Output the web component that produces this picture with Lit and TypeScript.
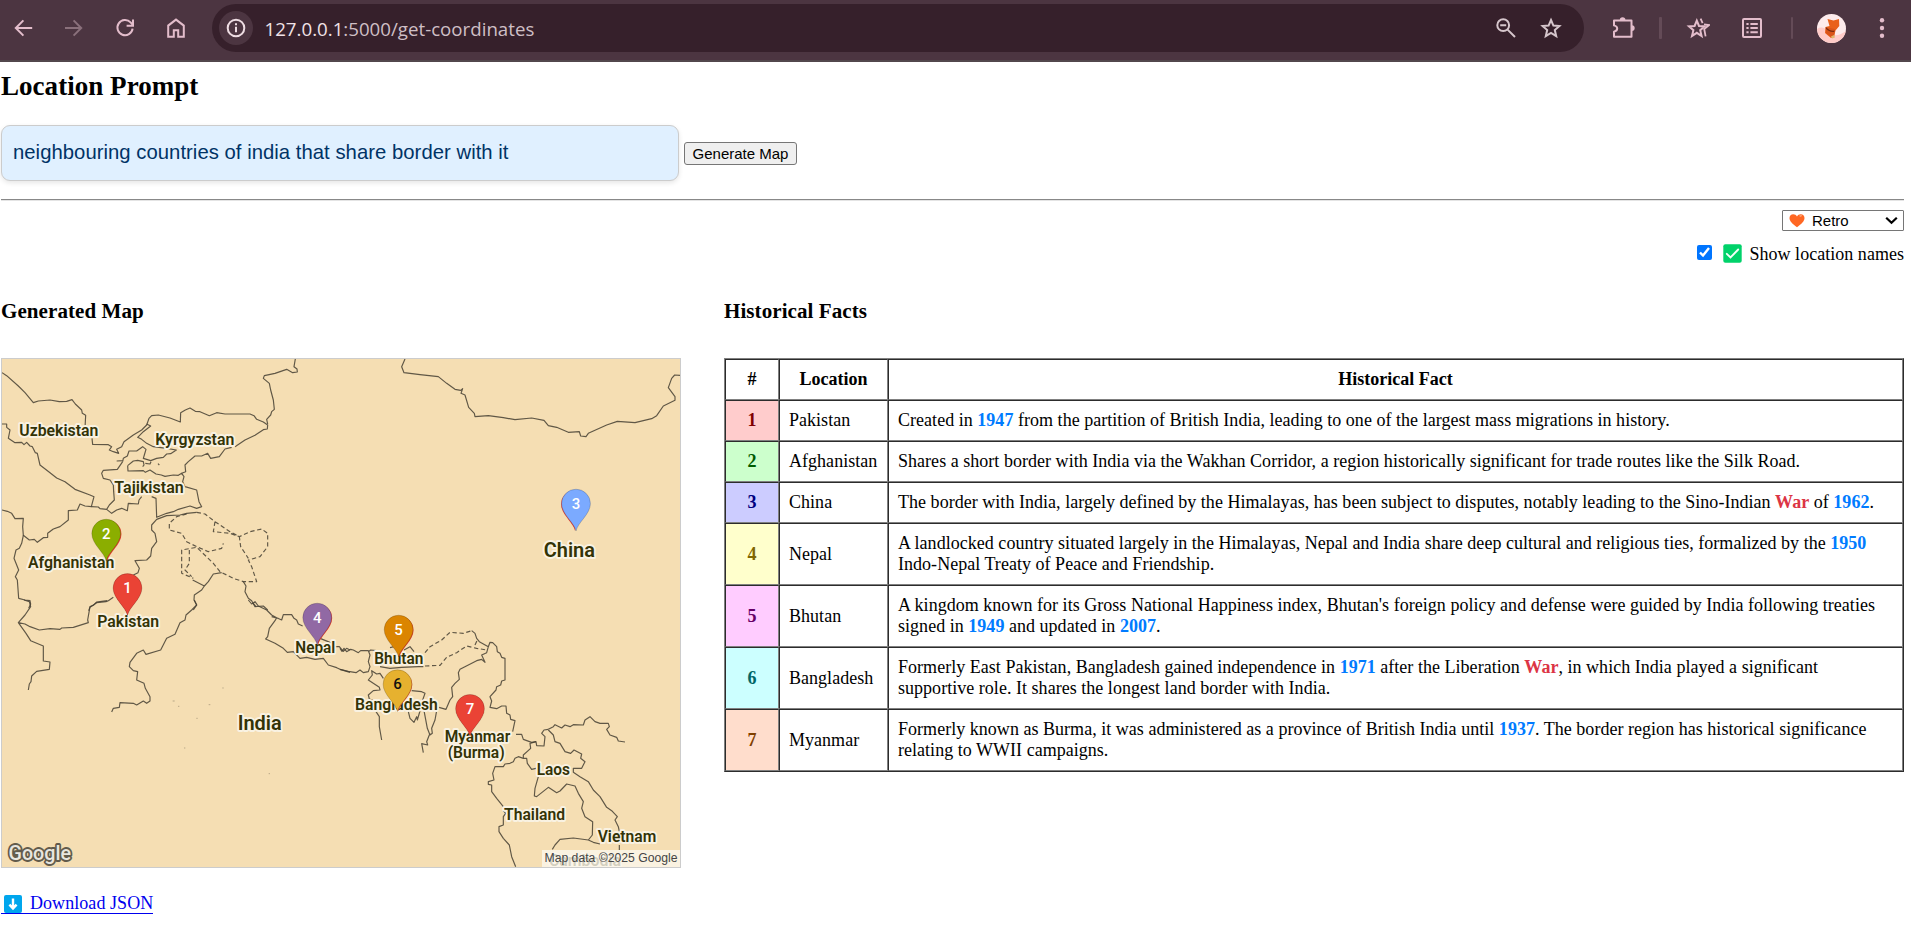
import { LitElement, html, svg, css } from "lit";
import { customElement } from "lit/decorators.js";

const icon = (body: unknown, w = 24) =>
  html`<svg width=${w} height="24" viewBox="0 0 ${w} 24" fill="none" stroke="currentColor" stroke-width="2">${body}</svg>`;

@customElement("browser-bar")
export class BrowserBar extends LitElement {
  static styles = css`
    :host { display: flex; align-items: center; box-sizing: border-box; height: 62px; padding: 0 16px 4px 12px;
      background: #4c3541; border-bottom: 2px solid #52474c; color: #e3bdcb; font-family: "Open Sans", "Noto Sans", sans-serif; }
    svg { display: block; flex: none; }
    .fwd { margin-left: 26px; color: #8a707b; }
    .reload { margin-left: 27px; }
    .home { margin-left: 27px; }
    .omni { margin-left: 24px; width: 1372px; height: 48px; box-sizing: border-box; border-radius: 24px; background: #36202b;
      display: flex; align-items: center; padding: 0 21px 0 7px; color: #d6c6cc; }
    .info { width: 34px; height: 34px; border-radius: 50%; background: #4c3541; display: grid; place-items: center; color: #eedde3; }
    .url { margin-left: 11.5px; flex: 1; font-size: 18.7px; color: #cfbfc5; white-space: nowrap; }
    .url b { font-weight: 400; color: #f0e2e7; }
    .star { margin-left: 21px; }
    .puzzle { margin-left: 28px; }
    .sep { width: 2.5px; height: 22px; background: #644b57; border-radius: 1px; }
    .s1 { margin-left: 23px; }
    .fav { margin-left: 24px; }
    .list { margin-left: 30px; }
    .s2 { margin-left: 27px; }
    .avatar { margin-left: 24px; }
    .dots { margin-left: 24px; }
  `;
  render() {
    return html`
      ${icon(svg`<path d="M20.2 12H4M11.4 4.4 3.8 12l7.6 7.6"/>`)}
      <span class="fwd">${icon(svg`<path d="M3 12h16.2M11.6 4.4l7.6 7.6-7.6 7.6"/>`)}</span>
      <span class="reload">${icon(svg`<path d="M19.6 12.6a7.6 7.6 0 1 1-2-6.2L19.4 8.4M20 3.6v6.2h-6.4"/>`)}</span>
      <span class="home">${icon(svg`<path d="M4.2 20.8V9.6L12 3.6l7.8 6v11.2h-5.6v-6.6H9.8v6.6z"/>`)}</span>
      <div class="omni">
        <span class="info">${icon(svg`<circle cx="12" cy="12" r="8.3"/><path d="M12 10.8v5.4M12 7.2v2"/>`)}</span>
        <span class="url"><b>127.0.0.1</b>:5000/get-coordinates</span>
        ${icon(svg`<circle cx="9.2" cy="9.2" r="5.9"/><path d="M13.6 13.6l7.4 7.4M6.2 9.2h6"/>`)}
        <span class="star">${icon(svg`<path d="M12 4l2.4 5.6 6 .5-4.6 4 1.4 6-5.2-3.2-5.2 3.2 1.4-6-4.6-4 6-.5z"/>`)}</span>
      </div>
      <span class="puzzle">${icon(svg`<path d="M2 4.400h17.500v16.400H2v-5q3.200-.8 3.200-3.200T2 9.400z" stroke-linejoin="round"/><path d="M7.800 4a2.800 2.800 0 0 1 5.600 0zM19.800 9.200a2.900 2.900 0 0 1 0 5.800z" fill="currentColor" stroke="none"/>`)}</span>
      <span class="sep s1"></span>
      <span class="fav">${icon(svg`<path d="M10.8 4.6l2.2 5.4 5.6.4-4.4 3.8 1.400 5.800-4.800-3.200L6 20l1.400-5.800L3 10.400l5.600-.4z"/><path d="M14.600 2.600l2 4.600M18 8.400l5.200.6-5 4 1.400 7.400" stroke-width="1.800"/>`)}</span>
      <span class="list">${icon(svg`<rect x="3" y="3" width="18" height="18" rx="1"/><path d="M6.4 8h2.2M6.4 12h2.2M6.4 16.2h2.2M10.4 8h7.4M10.4 12h7.4M10.4 16.2h7.4" stroke-width="1.9"/>`)}</span>
      <span class="sep s2"></span>
      <span class="avatar"><svg width="29" height="29" viewBox="0 0 29 29">
        <defs><clipPath id="face"><circle cx="14.5" cy="14.5" r="14.5"/></clipPath></defs>
        <g clip-path="url(#face)"><rect width="29" height="29" fill="#fdebec"/><path d="M0 15q6-4 12 3t17-1v13H0z" fill="#ffcbc8"/>
        <path d="M10.500 5l6 1.500 5.500-1.500.3 7-3.800 4.500L17 23l-3 1-6-5 .5-6 4-1z" fill="#e9601b"/><path d="M9 13l4 1 5 1-1 7-3 1-5-4z" fill="#d9541a"/><path d="M8.800 13q4 4.500 9 3.500l-.8 1.500q-5 .5-8.200-3.400" fill="#7d2c10"/><path d="M14 22.500l3-1.500 1 2.500-3 1z" fill="#e0b870"/></g>
      </svg></span>
      <span class="dots">${icon(svg`<g fill="currentColor" stroke="none"><circle cx="12" cy="4.2" r="2.2"/><circle cx="12" cy="12" r="2.2"/><circle cx="12" cy="19.8" r="2.2"/></g>`)}</span>
    `;
  }
}

type Label = [text: string, x1: number, x2: number, y: number, size: number];
const LABELS: Label[] = [
  ["Uzbekistan", 19.3, 98.3, 436, 15.8],
  ["Kyrgyzstan", 155.3, 234.3, 444.6, 15.8],
  ["Tajikistan", 114.3, 183.7, 493.3, 15.8],
  ["Afghanistan", 28, 114.3, 568.3, 15.8],
  ["China", 543.7, 595, 556.5, 20.5],
  ["Pakistan", 97.3, 159, 626.7, 15.8],
  ["Nepal", 295.3, 335.3, 652.7, 15.8],
  ["India", 237.7, 281.7, 729.7, 20.5],
  ["Bhutan", 374.3, 423.3, 664, 15.8],
  ["Bangladesh", 355, 437.8, 710.4, 15.8],
  ["Myanmar", 444.7, 510.3, 742, 15.8],
  ["(Burma)", 447.7, 504.7, 757.6, 15.8],
  ["Laos", 536.7, 570, 775, 15.8],
  ["Thailand", 504, 565, 819.7, 15.8],
  ["Vietnam", 597.7, 656.3, 842.4, 15.8],
  ["Cambodia", 549, 621, 865.5, 15.8],
];

/* number, x of the tip, y of the top, fill, text colour, sideways shift of the red pin underneath */
type Pin = [n: string, x: number, top: number, fill: string, ink: string, dx: number];
const PINS: Pin[] = [
  ["2", 106.2, 519.2, "#8bae00", "#fff", 1.3],
  ["1", 127.5, 573.6, "#ea4335", "#fff", 0],
  ["3", 576, 489.2, "#7baaff", "#fff", -1],
  ["4", 317.2, 603.2, "#9169a4", "#fff", 1],
  ["5", 398.6, 615.2, "#db8500", "#fff", 1],
  ["7", 470, 694.4, "#ea4335", "#fff", 0],
  ["6", 397.5, 669.8, "#e6b12f", "#111", 0.8],
];

const PIN = "M0 41.8C-1.6 33.5-14.4 25-14.4 14.4A14.4 14.4 0 0 1 14.4 14.4C14.4 25 1.6 33.5 0 41.8z";

@customElement("region-map")
export class RegionMap extends LitElement {
  static styles = css`
    :host { display: block; width: 677.5px; height: 508px; border: 1px solid #ccc; overflow: hidden; background: #f5deb3; }
    svg { display: block; }
    .line { fill: none; stroke: #453f33; stroke-width: 3.5; stroke-linejoin: round; opacity: 0.85; }
    .dash { stroke-dasharray: 13 8; }
    .name { font-family: Roboto, sans-serif; font-weight: 600; fill: #333306; stroke: #f9f2e2; stroke-width: 3.8; stroke-linejoin: round; paint-order: stroke; }
    .num { font: 500 15px Roboto, sans-serif; text-anchor: middle; }
    .credit { font: 12px "Liberation Sans", Arial, sans-serif; fill: #444; }
    .logo { font: 500 21px Roboto, Lato, sans-serif; fill: #e9e6df; stroke: #625b4c; stroke-width: 3.8; stroke-linejoin: round; paint-order: stroke; }
  `;
  render() {
    return html`<svg width="678" height="509" viewBox="2 359 678 509">
      <rect x="0" y="350" width="700" height="530" fill="#f5deb3"/>
      <g transform="translate(0 350) scale(.33333)">
        <path class="line" d="M6 68L20 77 55 108 75 128 100 158 115 153 150 150 178 155 200 154 216 149 226 162 245 180 247 190 257 196 255 235M276 265L278 283 325 284 335 290 328 300 340 305 356 310 350 298 365 290 372 275 400 255 425 240 440 225 447 205 455 197 475 195 510 204 541 216 542 188 556 180 570 174 586 184 600 185 628 197 650 188 675 192 710 192 750 192 762 197 770 208 790 216 803 225 802 237 790 239 765 256 735 270 705 290M695 292L675 297 658 320 632 325 623 310 605 318 585 318 565 335 555 345 557 365 545 370"/>
        <path class="line" d="M803 222L800 208 812 195 815 185 823 178 820 150 812 120 808 100 790 85 793 77 825 70 860 58 878 68 892 66 891 57 882 50 886 27M6 222L20 222 20 232 30 240 25 265 45 278 65 277 72 284 80 277 90 288 97 290 106 308 112 310 120 345 150 368 170 384 195 395 225 418 270 435 282 440 274 470 255 468 240 462 232 480 205 482 205 510 180 530 160 537 143 550 143 562 130 563 112 577 103 568 88 570 70 556 68 530 70 505 45 506 35 490 22 484 6 480"/>
        <path class="line" d="M274 470L295 471 300 476 320 478 335 490 350 480 365 475 382 482 385 460 415 462 417 450 425 440M320 478L328 465 343 450 341 425 340 405 330 390 310 385 305 370 310 361 352 358 368 335 370 325 382 318 387 303 410 303 428 290 438 298 433 315 430 325 452 332 470 325 490 322 500 312 512 311 529 300 500 295 460 290 440 280 425 268 413 262 430 245 452 228 440 222M350 333L370 332M383 347L400 333 413 331 430 335 432 345 428 350M436 340L450 342 453 335M474 341L478 345M383 347L384 363 430 362 436 367 450 360 468 372 484 375 495 379 520 375 535 376 545 370 552 380 548 395 555 410 590 420 597 455 605 470 590 475 570 468 535 478 520 485 500 490 470 502 468 445 455 440"/>
        <path class="line" d="M590 487L560 490 540 495 500 497 470 508 455 525 455 540 465 550 470 575 455 595 452 618 440 630 405 632 418 655 414 668 400 675M340 742L325 752 318 755 290 758 270 772 266 782M70 556L65 580 58 595 48 600 42 625 56 660 46 680 52 690 56 745 75 750 90 752 92 762 86 775M665 668L640 672 625 695 613 708 578 690M613 708L605 720 583 735 582 750 590 765 580 780M730 695L738 708 735 725 745 745 755 752 765 770 790 768 803 780"/>
        <path class="line dash" d="M560 492L530 500 508 520 508 540 545 550 560 575 590 590 625 605 665 595 670 580M590 487L615 492 645 515 640 545 690 550 718 560 750 545 785 537 803 550 803 590 780 620 745 630 755 650 770 695 730 695 700 685 660 665 640 640 590 592 545 600 545 670 580 685M645 515L690 545 718 560 722 590 745 625M568 600L568 640 555 660 575 680"/>
      </g>
      <g transform="translate(340 350) scale(.33333)">
        <path class="line" d="M195 27L185 50 192 68 240 74 295 80 320 100 345 118 362 121 368 116 363 130 375 135 386 172 403 190 405 200 445 197 490 203 525 209 575 204 612 211 625 227 650 232 685 247 718 245 722 258 738 260 745 250 800 225 832 214 885 218 935 206 950 197 970 168 1005 151 1005 140 985 113 995 85 1004 75 1020 76"/>
      </g>
      <g transform="translate(0 600) scale(.33333)">
        <path class="line" d="M72 0L88 5 92 20 75 45 55 68 75 72 90 80 118 90 150 86 180 88 185 84 220 82 265 68 263 60 270 20 280 16 290 6 305 4 322 2M55 68L78 100 92 122 130 138 130 183 150 186 148 208 110 214 95 228 93 245 88 252 85 270M583 0L590 15 575 30 558 45 555 60 540 68 525 103 500 115 482 150 438 163 430 150 410 160 390 187 388 200 400 212 413 215 410 240 432 250 436 265 450 290 450 303 440 310 430 303 410 315 400 310 360 308 358 322 340 325 335 336"/>
        <path class="line" d="M745 0L755 12 765 5 775 18 800 30 815 45 830 53 825 62 808 85 803 110 797 117 825 130 850 145 862 157 880 155 900 175 920 172 945 178 970 175 985 195 1010 203 1020 208 1050 217M830 53L845 60 850 44 875 44 882 55 890 60 895 72 908 78M962 116L990 127 1005 140 1018 140 1030 154 1040 145 1050 150M760 10L768 20M815 50L835 55"/>
        <path d="M518 303h6M534 319h4M626 314h5M667 264h4M589 355h4M552 444h4M806 521h4" stroke="#b9a888" stroke-width="3"/>
      </g>
      <g transform="translate(340 600) scale(.33333)">
        <path class="line" d="M0 145L6 154 12 145 20 155 32 148 40 150 55 158 62 152 85 152 90 165 85 185 90 200 85 215 70 218 60 210 48 218 25 214 0 208M85 155L92 150 110 152M120 200L150 205 185 202 235 200 250 200M150 143L170 138M192 150L210 140 222 155M395 92L405 100 410 115 418 125 445 140 450 127 458 128 470 140 472 155 480 160 485 172 495 175 495 240 485 243 482 255 470 260 468 270 450 290 455 303 450 322 470 326 485 318 498 318 500 340 510 345 512 358 525 362 518 395M528 403L545 403 550 418 575 427 588 425 590 437 612 438 615 410 605 400 612 390 625 388M445 140L440 158 425 165 435 187 425 178 410 182 360 208 355 218 358 238 345 250 335 262 338 290 330 300 318 328 297 322"/>
        <path class="line" d="M130 235L120 220 110 222 95 212 97 225 85 240 118 262 120 270 100 272 85 285 88 297 98 300M108 335L118 350 118 380 125 420M215 272L245 275 255 280 248 300M205 335L210 355 222 367 230 350 232 360 240 333M252 332L262 385 270 405 277 400 275 385 285 360 290 332M270 400L260 425 263 435 245 431 250 458"/>
        <path class="line" d="M625 388L640 380 645 374 665 384 675 375 690 380 700 374 730 375 735 360 750 350 765 365 780 370 805 370 808 380 800 388 810 405 830 412 835 423 855 426M625 390L640 405 645 425 660 430 675 455 692 460 702 450 725 462 722 475 735 485 725 505 700 505 700 517 720 530 745 545 760 570 780 590 800 622 815 632 832 650 825 660 835 680 838 695M838 735L838 750M588 425L570 430 572 445 550 465 550 475 560 475 562 490 575 508 588 505M550 475L535 470 525 475 520 485 510 490 495 492 490 500 465 500 458 520 462 540 445 545 445 553 455 555 455 575 470 595 490 620M595 530L585 565 583 588 590 590 625 562 650 578 660 573 680 552 705 558 715 580 730 605 725 625 735 650 758 665 757 705 745 720 700 714 660 718 645 735 637 748M745 720L760 727 780 732M490 632L497 640 490 650 490 675 477 680 477 695 490 715 508 735 515 770 527 800"/>
        <path class="line dash" d="M255 158L270 140 305 120 330 97 370 100 395 92M405 135L412 120M255 198L300 196 320 172 350 158 380 138 410 145 440 150"/>
      </g>
      ${LABELS.map(([t, a, b, y, s]) => svg`<text class="name" x=${a} y=${y} font-size=${s} textLength=${b - a} lengthAdjust="spacingAndGlyphs">${t}</text>`)}
      ${PINS.map(([n, x, top, fill, ink, dx]) => svg`<g transform="translate(${x} ${top})">
        <path d=${PIN} fill="#ea4335" transform="translate(${dx} 1) scale(.97)"/>
        <path d=${PIN} fill=${fill} stroke="#00000040" stroke-width=".7"/>
        <text class="num" x="0" y="19.6" fill=${ink}>${n}</text></g>`)}
      <text class="logo" x="8.5" y="859.6" textLength="62.5" lengthAdjust="spacingAndGlyphs">Google</text>
      <rect x="542" y="850" width="140" height="20" fill="#fbf6ec" opacity=".8"/>
      <text class="credit" x="544.5" y="862.4" textLength="133" lengthAdjust="spacingAndGlyphs">Map data ©2025 Google</text>
    </svg>`;
  }
}

const FACTS: [string, string][] = [
  ["Pakistan", "Created in 1947 from the partition of British India, leading to one of the largest mass migrations in history."],
  ["Afghanistan", "Shares a short border with India via the Wakhan Corridor, a region historically significant for trade routes like the Silk Road."],
  ["China", "The border with India, largely defined by the Himalayas, has been subject to disputes, notably leading to the Sino-Indian War of 1962."],
  ["Nepal", "A landlocked country situated largely in the Himalayas, Nepal and India share deep cultural and religious ties, formalized by the 1950 Indo-Nepal Treaty of Peace and Friendship."],
  ["Bhutan", "A kingdom known for its Gross National Happiness index, Bhutan's foreign policy and defense were guided by India following treaties signed in 1949 and updated in 2007."],
  ["Bangladesh", "Formerly East Pakistan, Bangladesh gained independence in 1971 after the Liberation War, in which India played a significant supportive role. It shares the longest land border with India."],
  ["Myanmar", "Formerly known as Burma, it was administered as a province of British India until 1937. The border region has historical significance relating to WWII campaigns."],
];

const highlight = (text: string) =>
  text.split(/(\b\d{4}\b|\bWar\b)/).map((part) =>
    /^\d{4}$/.test(part) ? html`<b class="year">${part}</b>` : part === "War" ? html`<b class="war">${part}</b>` : part);

@customElement("facts-table")
export class FactsTable extends LitElement {
  static styles = css`
    :host { display: block; }
    table { width: 100%; border-spacing: 0; border: 1px outset gray; font-size: 18px; line-height: 21px; }
    th, td { border: 1px inset gray; padding: 9px; text-align: left; }
    th { text-align: center; }
    .n { width: 34px; text-align: center; font-weight: bold; }
    .loc { width: 89px; }
    td { letter-spacing: 0.03px; }
    .year { color: #007bff; }
    .war { color: #dc3545; }
    .r1 { background: #ffcccc; color: #800000; }
    .r2 { background: #ccffcc; color: #005c00; }
    .r3 { background: #ccccff; color: #000080; }
    .r4 { background: #ffffcc; color: #806600; }
    .r5 { background: #ffccff; color: #660066; }
    .r6 { background: #ccffff; color: #006666; }
    .r7 { background: #ffddcc; color: #804000; }
  `;
  render() {
    return html`<table>
      <tr><th class="n">#</th><th class="loc">Location</th><th>Historical Fact</th></tr>
      ${FACTS.map(([place, fact], i) => html`<tr><td class="n r${i + 1}">${i + 1}</td><td>${place}</td><td>${highlight(fact)}</td></tr>`)}
    </table>`;
  }
}

@customElement("app-root")
export class AppRoot extends LitElement {
  static styles = css`
    :host { display: block; height: 952px; overflow: hidden; background: #fff; color: #000;
      font: 18px/21px "Liberation Serif", "Times New Roman", serif; }
    main { padding: 0 7px 0 1px; }
    h2 { margin: 0; padding-top: 9px; font-size: 27px; line-height: 31px; letter-spacing: 0.04px; }
    .prompt { display: flex; align-items: center; gap: 5px; margin-top: 23px; }
    .prompt input { box-sizing: border-box; width: 678px; height: 56px; padding: 0 11px 2px; margin: 0; border: 1px solid #ccc; border-radius: 9px;
      background: #e0f0ff; color: #003366; font: 20.3px "Liberation Sans", Arial, sans-serif; letter-spacing: 0.03px; box-shadow: 0 2px 5px rgba(0,0,0,.1); }
    .prompt button { box-sizing: border-box; height: 23px; width: 113px; margin-top: 1px; padding: 0; border: 1px solid #767676; border-radius: 3px;
      background: #efefef; color: #000; font: 15px "Liberation Sans", Arial, sans-serif; white-space: nowrap; }
    .rule { margin-top: 18px; height: 1px; background: #888; border-bottom: 1px solid #e4e4e4; }
    .tools { display: flex; flex-direction: column; align-items: flex-end; }
    .theme { box-sizing: border-box; width: 122px; height: 21px; margin-top: 9px; border: 1px solid #767676; border-radius: 1px; display: flex; align-items: center;
      padding: 0 5px 0 6px; font: 15px/19px "Liberation Sans", Arial, sans-serif; }
    .theme span { flex: 1; margin-left: 7px; }
    .names { display: flex; align-items: center; height: 22px; margin-top: 12px; letter-spacing: 0.03px; }
    .names input { width: 15px; height: 15px; margin: 0 11px 3px 0; }
    .names svg { margin: 0 7.5px 1px 0; }
    .cols { display: grid; grid-template-columns: 679.5px 1fr; column-gap: 43px; margin-top: 34px; }
    h3 { margin: 0 0 35px; font-size: 21.06px; line-height: 24px; letter-spacing: 0.06px; }
    .hist { padding-left: 0.5px; }
    .dl { display: inline-flex; align-items: center; margin-top: 25px; color: #0000ee; text-decoration: none; border-bottom: 1px solid #0000ee; height: 20px; line-height: 21px; padding-left: 3px; letter-spacing: 0.06px; }
    .dl svg { margin: 0 8px -1px 0; }
    svg { display: block; flex: none; }
  `;
  render() {
    return html`
      <browser-bar></browser-bar>
      <main>
        <h2>Location Prompt</h2>
        <div class="prompt">
          <input type="text" .value=${"neighbouring countries of india that share border with it"} />
          <button>Generate Map</button>
        </div>
        <div class="rule"></div>
        <div class="tools">
          <div class="theme">
            <svg width="16" height="15" viewBox="0 0 16 15"><path d="M8 14.2C3.4 10.8.5 8 .5 4.9.5 2.700 2.100 1.200 4.200 1.200 5.900 1.200 7.200 2 8 3.400 8.800 2 10.100 1.200 11.800 1.200 13.900 1.200 15.500 2.700 15.500 4.900 15.500 8 12.600 10.800 8 14.200z" fill="#ff6723"/><path d="M10.6 3.4q1-1 2.200-.6" stroke="#ffa070" stroke-width="1.500" fill="none"/></svg>
            <span>Retro</span>
            <svg width="13" height="9" viewBox="0 0 13 9"><path d="M1.200 1.800L6.500 6.800 11.800 1.800" fill="none" stroke="#000" stroke-width="2.200"/></svg>
          </div>
          <label class="names">
            <input type="checkbox" checked />
            <svg width="19" height="19" viewBox="0 0 19 19"><rect x=".3" y=".3" width="18.400" height="18.400" rx="2" fill="#00d26a"/><path d="M3.800 9.800l3.700 3.700 7.700-8" fill="none" stroke="#f4fff8" stroke-width="1.900" stroke-linecap="round"/></svg>
            Show location names
          </label>
        </div>
        <div class="cols">
          <section>
            <h3>Generated Map</h3>
            <region-map></region-map>
            <a class="dl" href="#"><svg width="18" height="18" viewBox="0 0 18 18"><rect width="18" height="18" rx="2" fill="#00a6ed"/><path d="M9 3.500v9M5.400 9.600L9 13.400l3.600-3.800" fill="none" stroke="#fff" stroke-width="2.400"/></svg>Download JSON</a>
          </section>
          <section class="hist">
            <h3>Historical Facts</h3>
            <facts-table></facts-table>
          </section>
        </div>
      </main>
    `;
  }
}
